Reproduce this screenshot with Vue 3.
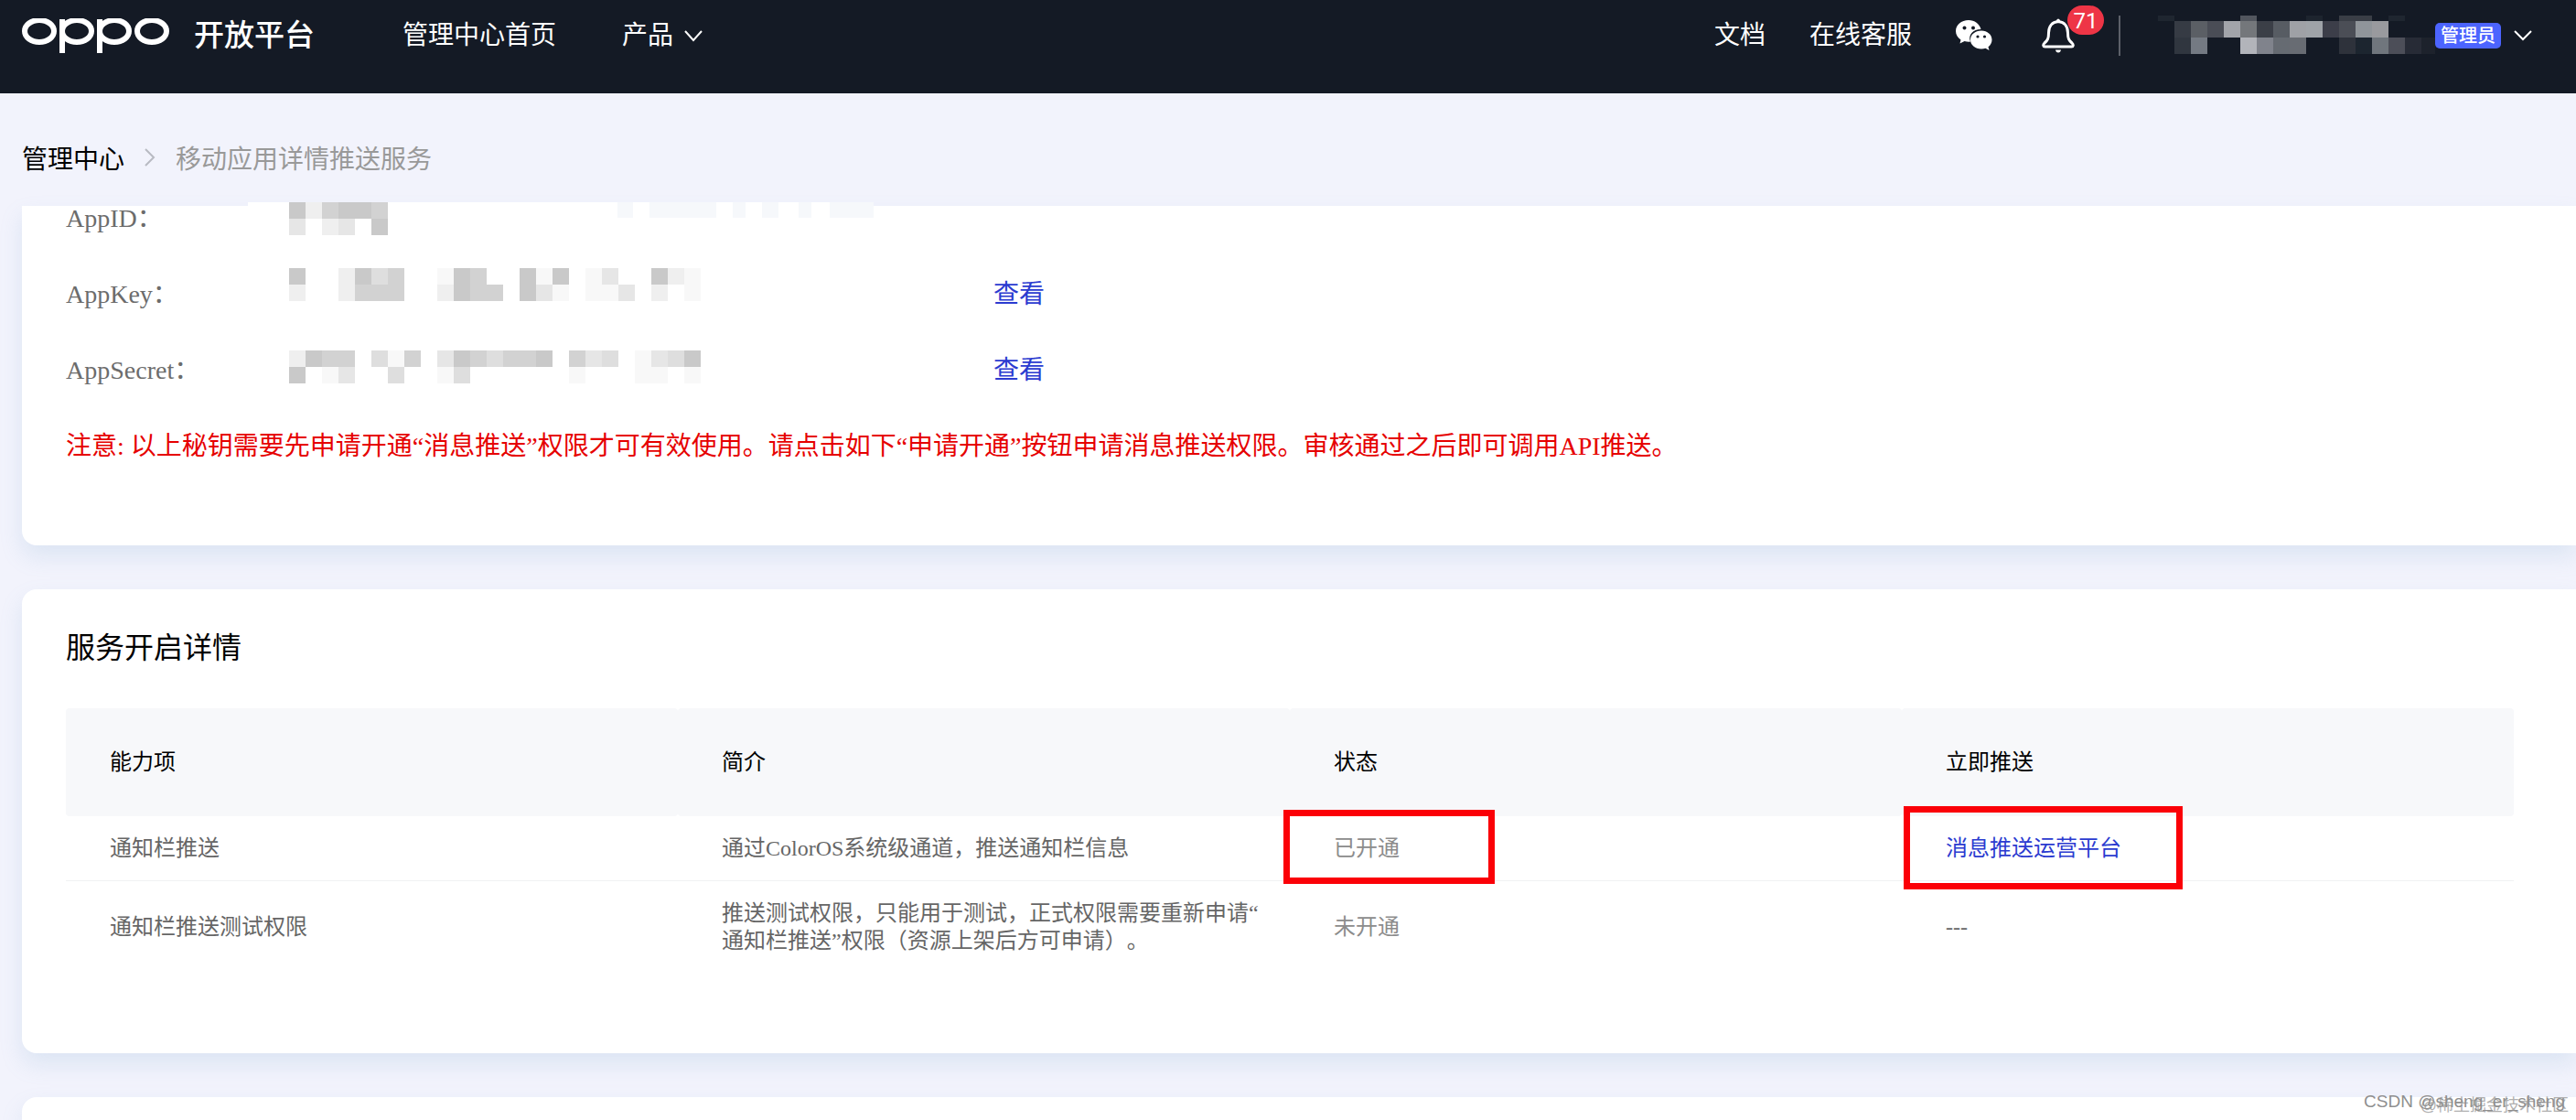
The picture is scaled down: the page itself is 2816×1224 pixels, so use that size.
<script setup>
import { ref } from 'vue'

const unread = ref(71)

const keys = [
    { label: 'AppID：', canView: false },
    { label: 'AppKey：', canView: true },
    { label: 'AppSecret：', canView: true }
]

const columns = ['能力项', '简介', '状态', '立即推送']

const services = [
    {
        name: '通知栏推送',
        desc: '通过ColorOS系统级通道，推送通知栏信息',
        status: '已开通',
        link: '消息推送运营平台',
        marked: true
    },
    {
        name: '通知栏推送测试权限',
        desc: '推送测试权限，只能用于测试，正式权限需要重新申请“\n通知栏推送”权限（资源上架后方可申请）。',
        status: '未开通',
        link: '',
        marked: false
    }
]

// masked account name: [column, row, colour]
const nameCells = [
    [0, 0, '#1f2630'], [5, 0, '#52565e'], [9, 0, '#1d242e'], [11, 0, '#3a3e46'], [12, 0, '#3a3e46'], [14, 0, '#1f2630'],
    [1, 1, '#363b44'], [2, 1, '#5b5f65'], [3, 1, '#4a4d56'], [4, 1, '#a2a4aa'], [5, 1, '#74777b'], [6, 1, '#3b3f47'],
    [7, 1, '#575c63'], [8, 1, '#9fa1a6'], [9, 1, '#9fa3a8'], [10, 1, '#3c3e49'], [11, 1, '#4b4e56'], [12, 1, '#90959a'], [13, 1, '#999a9e'],
    [1, 2, '#30363f'], [2, 2, '#747a83'], [5, 2, '#b2b4ba'], [6, 2, '#80838c'], [7, 2, '#666b72'], [8, 2, '#686c73'],
    [11, 2, '#2e323b'], [12, 2, '#1c252f'], [13, 2, '#70767d'], [14, 2, '#4c4e58'], [15, 2, '#272b36'], [16, 2, '#1d222c']
]

// masked key values, one character per cell, "." is empty
const shades = { 1: '#f8f8f8', 2: '#efefef', 3: '#e6e6e6', 4: '#dedede', 5: '#d2d2d2', 6: '#c9c9c9' }
const masks = [
    { y: 0, rows: ['625665', '3.23.6'] },
    { y: 72, rows: ['6..2645..165..616.13..621', '2..2555..2655.631.113.2.1'] },
    { y: 162, rows: ['2655.415.3654556.534.1346', '6.13..4..14......1...11.1'] }
]

const keyCells = masks.flatMap(m =>
    m.rows.flatMap((row, r) =>
        [...row].map((c, i) => ({ x: 45 + i * 18, y: m.y + r * 18, fill: shades[c] })).filter(c => c.fill)
    )
)
</script>

<template>
    <div class="page">
        <header class="header">
            <a href="#" class="brand">
                <svg class="logo" width="162" height="38" viewBox="0 0 162 38" role="img" aria-label="OPPO">
                    <g fill="none" stroke="#fff" stroke-width="6">
                        <ellipse cx="19" cy="14" rx="16" ry="12" />
                        <ellipse cx="60" cy="14" rx="16" ry="12" />
                        <ellipse cx="101" cy="14" rx="16" ry="12" />
                        <ellipse cx="142" cy="14" rx="16" ry="12" />
                    </g>
                    <path d="M41 1h6v37h-6zM82 1h6v37h-6z" fill="#fff" />
                </svg>
                <span class="brand-name">开放平台</span>
            </a>
            <nav class="nav">
                <a href="#">管理中心首页</a>
                <button type="button" class="drop">
                    产品
                    <svg width="20" height="14" viewBox="0 0 20 14">
                        <path d="M1 2l9 10 9-10" fill="none" stroke="#fff" stroke-width="2" />
                    </svg>
                </button>
            </nav>
            <div class="tools">
                <a href="#">文档</a>
                <a href="#">在线客服</a>
                <a href="#" class="wechat" aria-label="微信">
                    <svg width="40" height="34" viewBox="0 0 40 34">
                        <path d="M14 0C6 0 0 5.4 0 12c0 4 2 7 5.5 9.500L4.500 25.500 9.500 23q3 .8 6.500.6C13 16 19 10 27.500 10 26 4 20.500 0 14 0z" fill="#fff" />
                        <path d="M28 11.500c-7 0-12 4.400-12 10s5 10 12 10q2.500 0 4.500-.7L36.500 33l-1-3.800c2.500-1.900 4-4.600 4-7.700 0-5.600-5-10-11.500-10z" fill="#fff" />
                        <g fill="#141a25">
                            <circle cx="9.5" cy="8.5" r="2" />
                            <circle cx="19" cy="8.5" r="2" />
                            <circle cx="24" cy="18" r="1.6" />
                            <circle cx="31.5" cy="18" r="1.6" />
                        </g>
                    </svg>
                </a>
                <button type="button" class="bell" aria-label="消息">
                    <svg width="36" height="38" viewBox="0 0 36 38">
                        <path d="M18 3.500C11 4 7.500 9 7.500 16c0 6-1 8-4.500 11-2 2-1.500 4 .5 4h29c2 0 2.500-2 .5-4-3.500-3-4.500-5-4.500-11 0-7-3.500-12-10.500-12.500z" fill="none" stroke="#fff" stroke-width="3" stroke-linejoin="round" />
                        <path d="M16 4V2q2-3 4 0v2zM15 34.500h6q-.5 3-3 3t-3-3z" fill="#fff" />
                    </svg>
                    <span class="badge">{{ unread }}</span>
                </button>
                <span class="divider"></span>
                <button type="button" class="account" aria-label="账号">
                    <svg width="303" height="44" viewBox="0 0 303 44" shape-rendering="crispEdges">
                        <rect
                            v-for="([x, y, fill], i) in nameCells"
                            :key="i"
                            :x="x * 18"
                            :y="y ? y * 18 - 12 : 0"
                            width="18"
                            :height="y ? 18 : 6"
                            :fill="fill"
                        />
                    </svg>
                    <span class="role">管理员</span>
                    <svg width="20" height="14" viewBox="0 0 20 14">
                        <path d="M1 2l9 9 9-9" fill="none" stroke="#fff" stroke-width="2" />
                    </svg>
                </button>
            </div>
        </header>

        <nav class="crumbs">
            <a href="#">管理中心</a>
            <svg width="12" height="20" viewBox="0 0 12 20">
                <path d="M1 1l9 9-9 9" fill="none" stroke="#b8bac2" stroke-width="2" />
            </svg>
            <span>移动应用详情推送服务</span>
        </nav>

        <main class="content">
            <section class="card keys">
                <div v-for="item in keys" :key="item.label" class="key-row">
                    <span class="key-label">{{ item.label }}</span>
                    <a v-if="item.canView" href="#" class="view">查看</a>
                </div>
                <p class="notice">注意: 以上秘钥需要先申请开通“消息推送”权限才可有效使用。请点击如下“申请开通”按钮申请消息推送权限。审核通过之后即可调用API推送。</p>
                <svg class="mask" width="684" height="200" viewBox="0 0 684 200" shape-rendering="crispEdges">
                    <path d="M0 0h404v17H0z" fill="#fff" />
                    <path d="M404 0h280v17H404z" fill="#f6f8fb" />
                    <path d="M421 0h18v17h-18zM512 0h18v17h-18zM544 0h18v17h-18zM580 0h22v17h-22zM616 0h20v17h-20z" fill="#fff" />
                    <rect v-for="(c, i) in keyCells" :key="i" :x="c.x" :y="c.y" width="18" height="18" :fill="c.fill" />
                </svg>
            </section>

            <section class="card services">
                <h2>服务开启详情</h2>
                <table>
                    <thead>
                        <tr>
                            <th v-for="col in columns" :key="col" scope="col">{{ col }}</th>
                        </tr>
                    </thead>
                    <tbody>
                        <tr v-for="item in services" :key="item.name">
                            <td>{{ item.name }}</td>
                            <td>{{ item.desc }}</td>
                            <td class="status">
                                {{ item.status }}
                                <span v-if="item.marked" class="mark mark-status"></span>
                            </td>
                            <td>
                                <a v-if="item.link" href="#">{{ item.link }}</a>
                                <template v-else>---</template>
                                <span v-if="item.marked" class="mark mark-link"></span>
                            </td>
                        </tr>
                    </tbody>
                </table>
            </section>

            <section class="card next"></section>
        </main>

        <div class="watermark back">@稀土掘金技术社区</div>
        <div class="watermark">CSDN @sheng_er_sheng</div>
    </div>
</template>

<style>
body {
    margin: 0;
}
</style>

<style scoped>
.page {
    position: relative;
    display: flex;
    flex-direction: column;
    min-height: 100vh;
    overflow: hidden;
    background: #f2f3fc;
    font-family: "Liberation Serif", "Noto Sans CJK SC", serif;
    text-spacing-trim: space-all;
}

a {
    color: inherit;
    text-decoration: none;
}

button {
    padding: 0;
    border: 0;
    background: none;
    color: inherit;
    font: inherit;
    cursor: pointer;
}

svg {
    display: block;
    flex: none;
}

.header {
    display: flex;
    align-items: center;
    height: 102px;
    padding: 0 48px 24px 24px;
    box-sizing: border-box;
    background: #141a25;
    color: #fff;
    font-family: Roboto, "Noto Sans CJK SC", sans-serif;
    font-size: 28px;
    line-height: 40px;
    white-space: nowrap;
}

.brand {
    display: flex;
    align-items: center;
    gap: 26px;
}

.brand-name {
    font-size: 33px;
    font-weight: 500;
}

.nav {
    display: flex;
    gap: 72px;
    margin-left: 96px;
}

.drop {
    display: flex;
    align-items: center;
    gap: 12px;
}

.tools {
    display: flex;
    align-items: center;
    gap: 48px;
    margin-left: auto;
}

.wechat {
    margin-right: 6px;
}

.bell {
    position: relative;
}

.badge {
    position: absolute;
    top: -14px;
    left: 28px;
    width: 40px;
    height: 32px;
    border-radius: 16px;
    background: #ee3546;
    font-size: 24px;
    line-height: 34px;
    text-align: center;
}

.divider {
    width: 2px;
    height: 44px;
    background: #5c6069;
}

.account {
    display: flex;
    align-items: center;
    margin-left: -7px;
}

.role {
    margin-right: 14px;
    padding: 0 6px;
    border-radius: 5px;
    background: #4c64ff;
    font-size: 20px;
    font-weight: 500;
    line-height: 28px;
}

.crumbs {
    display: flex;
    align-items: center;
    gap: 22px;
    padding: 50px 24px 33px;
    font-family: "Noto Sans CJK SC", sans-serif;
    font-size: 28px;
    line-height: 40px;
    color: #999;
}

.crumbs a {
    color: #000;
}

.content {
    display: flex;
    flex: 1;
    flex-direction: column;
    gap: 48px;
    padding-left: 24px;
}

.card {
    position: relative;
    padding: 0 68px 0 48px;
    border-radius: 16px 0 0 16px;
    background: #fff;
    box-shadow: 0 12px 24px rgba(120, 165, 205, 0.18);
}

.keys {
    display: grid;
    gap: 55px;
    padding-bottom: 94px;
    border-top-left-radius: 0;
    font-size: 28px;
    line-height: 28px;
}

.key-row {
    display: grid;
    grid-template-columns: 1014px auto;
    color: #6c6c6c;
}

.view,
td a {
    color: #2b3bd0;
}

.notice {
    margin: 0;
    color: #e60000;
}

/* spills over the top edge of the card */
.mask {
    position: absolute;
    top: -4px;
    left: 247px;
}

.services {
    padding-top: 46px;
    padding-bottom: 88px;
}

h2 {
    margin: 0 0 48px;
    font-size: 32px;
    font-weight: 400;
    line-height: 36px;
}

table {
    width: 100%;
    border-spacing: 0;
    table-layout: fixed;
    font-size: 24px;
    line-height: 30px;
    text-align: left;
}

th {
    padding: 44px 24px 44px 48px;
    border-radius: 4px;
    background: #f7f8fa;
    color: #000;
    font-weight: 400;
}

td {
    position: relative;
    padding: 20px 24px 20px 48px;
    color: #666;
    white-space: pre-line;
}

tr:not(:last-child) td {
    border-bottom: 1px solid #f0f1f3;
}

td.status {
    color: #8c8c8c;
}

.mark {
    position: absolute;
    box-sizing: border-box;
    border: 7px solid #fb0007;
}

.mark-status {
    top: -7px;
    left: -7px;
    width: 231px;
    height: 81px;
}

.mark-link {
    top: -11px;
    left: 2px;
    width: 305px;
    height: 91px;
}

.next {
    flex: 1;
    border-bottom-left-radius: 0;
}

.watermark {
    position: absolute;
    right: 12px;
    bottom: 8px;
    color: #8f8f8f;
    font-family: "Liberation Sans", "Noto Sans CJK SC", sans-serif;
    font-size: 19px;
    line-height: 24px;
}

.back {
    right: 8px;
    bottom: 4px;
    color: #b0b0b0;
    font-size: 18px;
}
</style>
